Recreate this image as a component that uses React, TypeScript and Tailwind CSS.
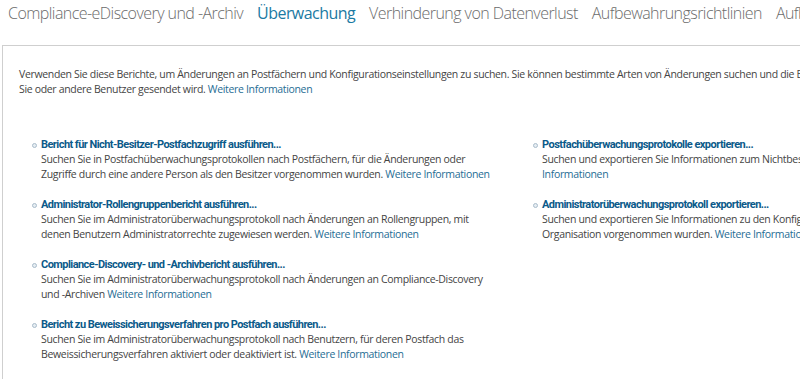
import React from 'react';

const FONT = { fontFamily: '"Open Sans", "Noto Sans", "Liberation Sans", sans-serif' };
const TITLE_FONT = { fontFamily: 'Roboto, "Open Sans", "Liberation Sans", sans-serif' };

const TABS = [
  { label: 'Compliance-eDiscovery und -Archiv', active: false },
  { label: 'Überwachung', active: true },
  { label: 'Verhinderung von Datenverlust', active: false },
  { label: 'Aufbewahrungsrichtlinien', active: false },
  { label: 'Aufbewahrungstags', active: false },
  { label: 'Journalregeln', active: false },
];

type Report = {
  title: string;
  lines: string[];
  // letzter Teil der letzten Zeile ist der Link
  linkOnLast: string;
};

const LEFT: Report[] = [
  {
    title: 'Bericht für Nicht-Besitzer-Postfachzugriff ausführen...',
    lines: [
      'Suchen Sie in Postfachüberwachungsprotokollen nach Postfächern, für die Änderungen oder',
      'Zugriffe durch eine andere Person als den Besitzer vorgenommen wurden.',
    ],
    linkOnLast: 'Weitere Informationen',
  },
  {
    title: 'Administrator-Rollengruppenbericht ausführen...',
    lines: [
      'Suchen Sie im Administratorüberwachungsprotokoll nach Änderungen an Rollengruppen, mit',
      'denen Benutzern Administratorrechte zugewiesen werden.',
    ],
    linkOnLast: 'Weitere Informationen',
  },
  {
    title: 'Compliance-Discovery- und -Archivbericht ausführen...',
    lines: [
      'Suchen Sie im Administratorüberwachungsprotokoll nach Änderungen an Compliance-Discovery',
      'und -Archiven',
    ],
    linkOnLast: 'Weitere Informationen',
  },
  {
    title: 'Bericht zu Beweissicherungsverfahren pro Postfach ausführen...',
    lines: [
      'Suchen Sie im Administratorüberwachungsprotokoll nach Benutzern, für deren Postfach das',
      'Beweissicherungsverfahren aktiviert oder deaktiviert ist.',
    ],
    linkOnLast: 'Weitere Informationen',
  },
];

const RIGHT: Report[] = [
  {
    title: 'Postfachüberwachungsprotokolle exportieren...',
    lines: [
      'Suchen und exportieren Sie Informationen zum Nichtbesitzer-Zugriff auf Postfächer. Weitere',
      '',
    ],
    linkOnLast: 'Informationen',
  },
  {
    title: 'Administratorüberwachungsprotokoll exportieren...',
    lines: [
      'Suchen und exportieren Sie Informationen zu den Konfigurationsänderungen, die in Ihrer',
      'Organisation vorgenommen wurden.',
    ],
    linkOnLast: 'Weitere Informationen',
  },
];

function ReportItem({ item }: { item: Report }) {
  const last = item.lines.length - 1;
  return (
    <div className="relative mb-[16px]">
      <span className="absolute left-[-9px] top-[5px] w-[5px] h-[5px] rounded-full border border-[#a9bccb] bg-[#e6edf2]" />
      <div
        className="text-[11px] leading-[14px] font-bold text-[#0b5a8a] tracking-[-0.55px] whitespace-nowrap"
        style={TITLE_FONT}
      >
        {item.title}
      </div>
      {item.lines.map((line, i) => (
        <div key={i} className="text-[10.5px] leading-[15px] tracking-[-0.33px] text-[#444] whitespace-nowrap">
          {line}
          {i === last && (
            <>
              {line ? ' ' : ''}
              <span className="text-[#1f6d94]">{item.linkOnLast}</span>
            </>
          )}
        </div>
      ))}
    </div>
  );
}

export default function App() {
  return (
    <div className="w-[800px] h-[379px] overflow-hidden bg-white" style={FONT}>
      {/* Tabs */}
      <div className="flex gap-[14px] pl-[8px] pt-[1px] h-[45px] whitespace-nowrap">
        {TABS.map((t) => (
          <span
            key={t.label}
            className={`text-[16px] leading-[24px] tracking-[-0.55px] ${
              t.active ? 'text-[#1b7aa3]' : 'text-[#6b6b6b] font-light'
            }`}
          >
            {t.label}
          </span>
        ))}
      </div>

      {/* Inhalt */}
      <div className="ml-[2px] w-[1200px] h-[340px] border-t border-l border-[#cfcfcf] pl-[16px] pt-[21px]">
        <div className="text-[10.5px] leading-[15px] tracking-[-0.33px] text-[#444] whitespace-nowrap">
          <div>
            Verwenden Sie diese Berichte, um Änderungen an Postfächern und Konfigurationseinstellungen zu suchen. Sie können bestimmte Arten von Änderungen suchen und die Berichte in einer E-Mail-Nachricht anzeigen lassen, die an
          </div>
          <div>
            Sie oder andere Benutzer gesendet wird. <span className="text-[#1f6d94]">Weitere Informationen</span>
          </div>
        </div>

        <div className="flex mt-[41px] pl-[22px]">
          <div className="w-[501px]">
            {LEFT.map((r) => (
              <ReportItem key={r.title} item={r} />
            ))}
          </div>
          <div className="w-[480px]">
            {RIGHT.map((r) => (
              <ReportItem key={r.title} item={r} />
            ))}
          </div>
        </div>
      </div>
    </div>
  );
}
